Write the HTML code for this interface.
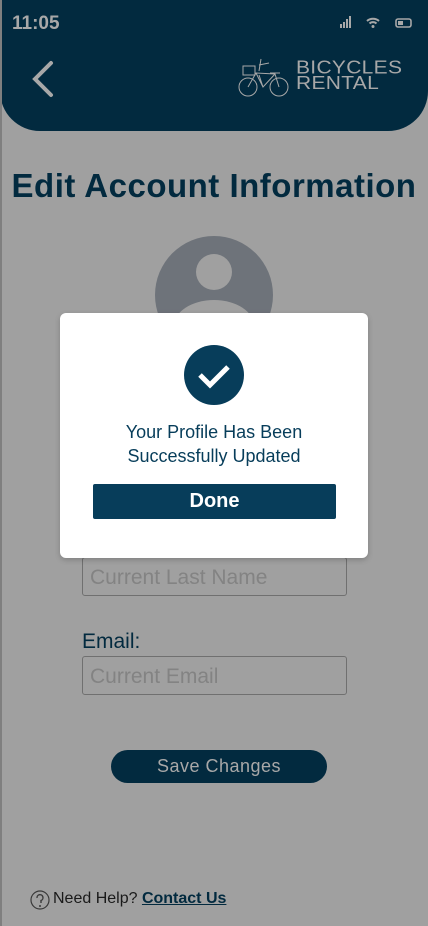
<!DOCTYPE html>
<html><head><style>
*{margin:0;padding:0;box-sizing:border-box}
body{width:428px;height:926px;background:#a0a0a0;position:relative;overflow:hidden;font-family:"Liberation Sans",sans-serif}
.hdr{position:absolute;left:0;top:0;width:428px;height:131px;background:#022a3f;border-radius:0 0 40px 40px}
.abs{position:absolute}
.title{left:0;width:428px;top:167px;text-align:center;font-weight:bold;font-size:33px;color:#022a3f;white-space:nowrap;letter-spacing:0.5px}
.inp{border:1px solid #707070;border-radius:3px;height:39px;width:265px;left:82px;font-size:21px;color:#838383;padding:8px 7px;white-space:nowrap}
.lbl{left:82px;font-size:21px;color:#022a3f}
.modal{left:60px;top:313px;width:308px;height:245px;background:#fff;border-radius:6px;box-shadow:0 2px 6px rgba(0,0,0,.2)}
</style></head><body>
<div class="hdr"></div>
<div class="abs" style="left:0;top:0;width:2px;height:926px;background:#7f7f7f"></div>
<div class="abs" style="left:12px;top:13px;color:#a8a8a8;font-weight:bold;font-size:19px">11:05</div>
<svg class="abs" style="left:338px;top:14px" width="80" height="16" viewBox="0 0 80 16">
<g fill="#a8a8a8"><rect x="2" y="10" width="2" height="4"/><rect x="5" y="8" width="2" height="6"/><rect x="8" y="5" width="2" height="9"/><rect x="11" y="2" width="2" height="12"/></g>
<path d="M29 7a9 9 0 0 1 12 0M31.5 9.5a5 5 0 0 1 7 0" stroke="#a8a8a8" stroke-width="2" fill="none"/><circle cx="35" cy="12.5" r="1.5" fill="#a8a8a8"/>
<rect x="58" y="5" width="15" height="8" rx="2" stroke="#a8a8a8" stroke-width="1.6" fill="none"/><rect x="60" y="7" width="5" height="4" fill="#a8a8a8"/></svg>
<svg class="abs" style="left:30px;top:60px" width="26" height="38"><path d="M21 3L5 19l16 16" stroke="#a8a8a8" stroke-width="4" fill="none" stroke-linecap="round"/></svg>
<svg class="abs" style="left:237px;top:53px" width="56" height="46" fill="none" stroke="#a8a8a8" stroke-width="1">
<circle cx="11" cy="34" r="9"/><circle cx="42" cy="34" r="9"/><rect x="6" y="13" width="12" height="9"/><path d="M11 34L19 20 38 21 42 34M19 20l7 14 12-13M26 34l-4-12M24 6l-2 12M22 12l10-2M33 20h10"/>
</svg>
<div class="abs" style="left:296px;top:60px;color:#a8a8a8;font-size:21px;line-height:17px;letter-spacing:0.3px;transform:scaleY(0.9);transform-origin:0 0">BICYCLES<br>RENTAL</div>
<div class="abs title">Edit Account Information</div>
<svg class="abs" style="left:155px;top:236px" width="118" height="118"><circle cx="59" cy="59" r="59" fill="#6e737a"/><circle cx="59" cy="36" r="18" fill="#a0a0a0"/><ellipse cx="59" cy="90" rx="40" ry="26" fill="#a0a0a0"/></svg>
<div class="abs inp" style="top:557px">Current Last Name</div>
<div class="abs lbl" style="top:630px">Email:</div>
<div class="abs inp" style="top:656px">Current Email</div>
<div class="abs" style="left:111px;top:750px;width:216px;height:33px;background:#022a3f;border-radius:17px;color:#a8a8a8;font-size:18px;text-align:center;line-height:33px;letter-spacing:.5px">Save Changes</div>
<svg class="abs" style="left:30px;top:890px" width="20" height="20"><circle cx="10" cy="10" r="9" stroke="#3a3a3a" fill="none" stroke-width="1.2"/><path d="M7 8a3 3 0 1 1 4 2.5V13" stroke="#3a3a3a" fill="none" stroke-width="1.4"/><circle cx="10" cy="16" r="1" fill="#3a3a3a"/></svg>
<div class="abs" style="left:53px;top:890px;font-size:16px;color:#1a1a1a">Need Help? <b style="color:#022a3f;text-decoration:underline">Contact Us</b></div>
<div class="abs modal">
<svg class="abs" style="left:124px;top:32px" width="60" height="60"><circle cx="30" cy="30" r="30" fill="#073d5a"/><path d="M16 30l10 10 18-18" stroke="#fff" stroke-width="5" fill="none"/></svg>
<div class="abs" style="left:0;width:308px;top:107px;text-align:center;font-size:18px;line-height:24px;color:#073d5a">Your Profile Has Been<br>Successfully Updated</div>
<div class="abs" style="left:33px;top:171px;width:243px;height:35px;background:#073d5a;border-radius:2px;color:#fff;font-weight:bold;font-size:20px;text-align:center;line-height:35px">Done</div>
</div>
</body></html>
